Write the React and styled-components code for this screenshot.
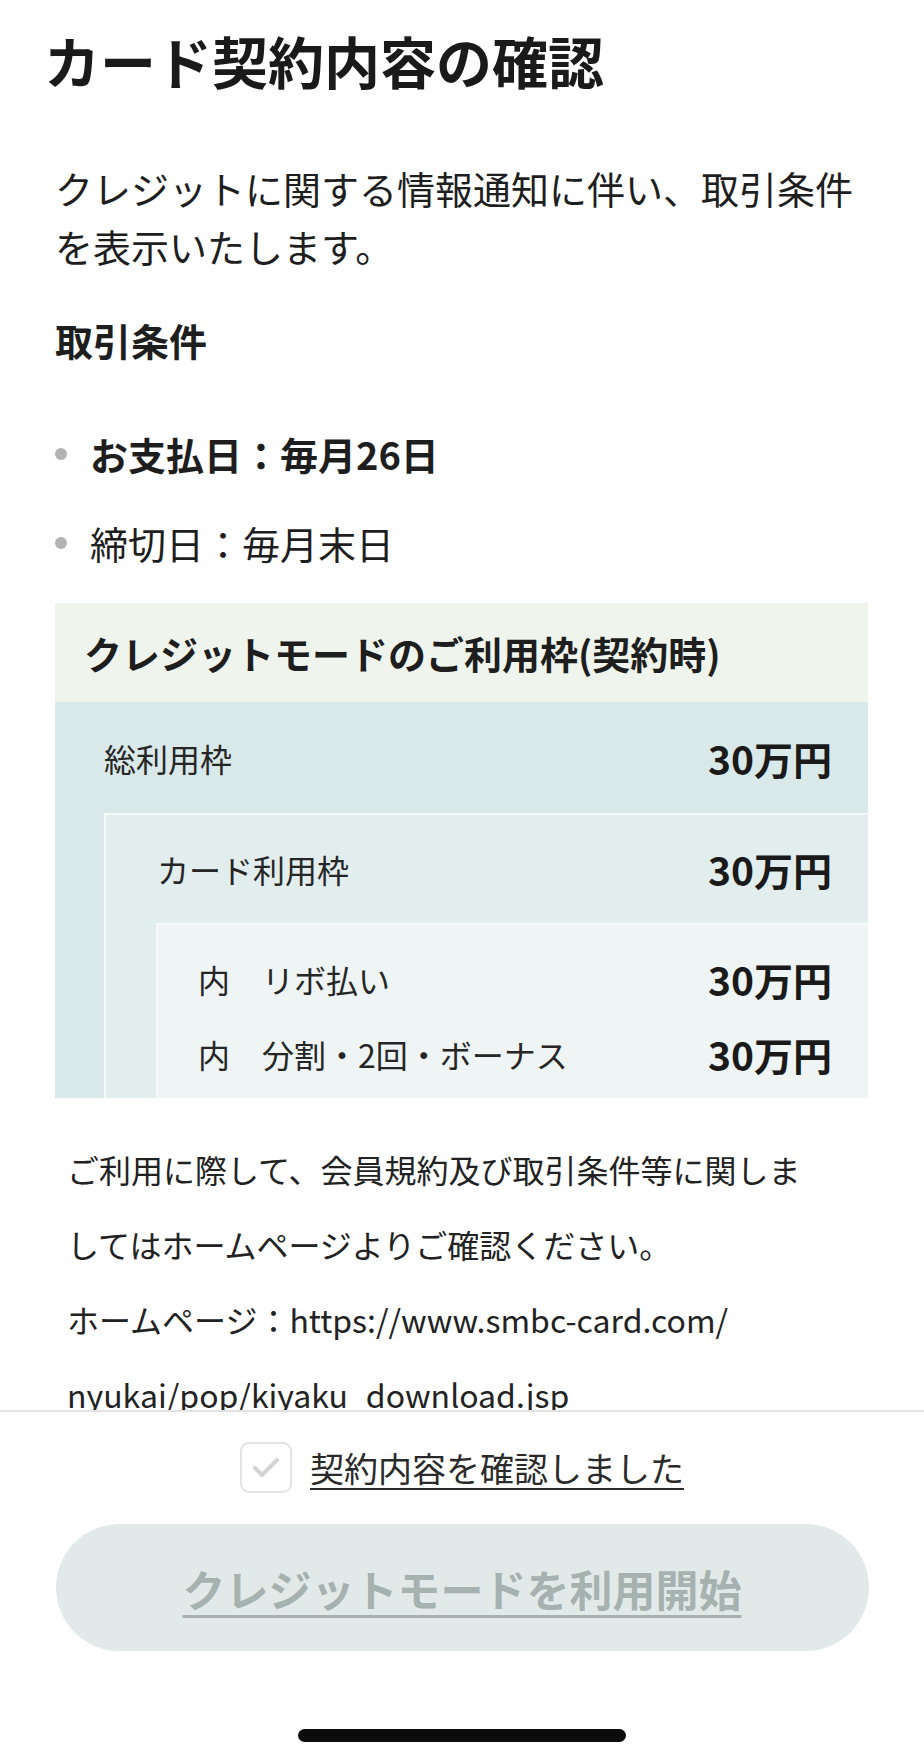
import React from 'react';
import styled, { createGlobalStyle } from 'styled-components';

const GlobalStyle = createGlobalStyle`
  body {
    margin: 0;
    background: #fff;
    font-family: "Noto Sans CJK JP", "Noto Sans", sans-serif;
    color: #1e1e1e;
  }
`;

const Screen = styled.div`
  width: 924px;
  height: 1758px;
  display: flex;
  flex-direction: column;
  background: #fff;
  overflow: hidden;
`;

const Content = styled.div`
  flex: 0 0 1410px;
  overflow: hidden;
  padding: 0 56px 0 55px;
  box-sizing: border-box;
`;

const Title = styled.h1`
  margin: 0 0 0 -11px;
  padding-top: 20px;
  font-size: 56px;
  line-height: 80px;
  font-weight: 700;
  color: #1a1a1a;
`;

const Lead = styled.p`
  margin: 59px 0 0;
  font-size: 38px;
  line-height: 58px;
`;

const SectionTitle = styled.h2`
  margin: 36px 0 0;
  font-size: 38px;
  line-height: 58px;
  font-weight: 700;
`;

const Terms = styled.ul`
  list-style: none;
  margin: 56px 0 0;
  padding: 0;
  display: flex;
  flex-direction: column;
  gap: 31px;
`;

const Term = styled.li`
  display: flex;
  align-items: center;
  gap: 23px;
  font-size: 38px;
  line-height: 58px;
  font-weight: ${p => (p.$strong ? 700 : 400)};
`;

const Dot = styled.span`
  width: 12px;
  height: 12px;
  border-radius: 50%;
  background: #b3b3b3;
  flex: none;
`;

const LimitBox = styled.section`
  margin-top: 31px;
`;

const LimitHead = styled.div`
  height: 99px;
  display: flex;
  align-items: center;
  padding-left: 29px;
  background: #eff5ec;
  font-size: 38px;
  font-weight: 700;
  color: #1e1e1e;
`;

const Level = styled.div`
  background: ${p => p.$bg};
  margin-left: ${p => p.$indent}px;
  border-top: ${p => (p.$edge ? '2px solid #f6faf9' : 'none')};
  border-left: ${p => (p.$edge ? '2px solid #f6faf9' : 'none')};
  padding: ${p => p.$pad || '0'};
`;

const Row = styled.div`
  height: ${p => p.$h}px;
  display: flex;
  align-items: center;
  justify-content: space-between;
  padding: 0 36px 0 ${p => p.$left}px;
`;

const Label = styled.span`
  font-size: 32px;
  color: #262626;
  white-space: pre;
`;

const Amount = styled.span`
  font-size: 39px;
  font-weight: 700;
  color: #1a1a1a;
`;

const Notice = styled.p`
  margin: 34px 0 0;
  padding: 0 12px;
  font-size: 32px;
  line-height: 75px;
  color: #222;
`;

const BottomBar = styled.footer`
  flex: 1;
  border-top: 2px solid #e2e2e2;
  display: flex;
  flex-direction: column;
  align-items: center;
`;

const Agree = styled.label`
  margin-top: 30px;
  display: flex;
  align-items: center;
  gap: 18px;
`;

const CheckBox = styled.span`
  width: 52px;
  height: 51px;
  box-sizing: border-box;
  border: 2px solid #e3e3e3;
  border-radius: 9px;
  display: flex;
  align-items: center;
  justify-content: center;
`;

const AgreeText = styled.span`
  font-size: 34px;
  color: #2a2a2a;
  text-decoration: underline;
  text-decoration-thickness: 2px;
  text-underline-offset: 6px;
`;

const StartButton = styled.button`
  margin-top: 31px;
  width: 813px;
  height: 127px;
  border: none;
  border-radius: 64px;
  background: #e2eae9;
  font-family: inherit;
  font-size: 43px;
  font-weight: 700;
  color: #a6b2b0;
  text-decoration: underline;
  text-decoration-thickness: 3px;
  text-underline-offset: 8px;
  padding: 0;
`;

const HomeIndicator = styled.div`
  margin-top: 78px;
  width: 328px;
  height: 13px;
  border-radius: 7px;
  background: #0c0c0c;
`;

const innerRows = [
  { label: '内　リボ払い', amount: '30万円' },
  { label: '内　分割・2回・ボーナス', amount: '30万円' },
];

export default function App() {
  return (
    <Screen>
      <GlobalStyle />
      <Content>
        <Title>カード契約内容の確認</Title>
        <Lead>クレジットに関する情報通知に伴い、取引条件を表示いたします。</Lead>
        <SectionTitle>取引条件</SectionTitle>
        <Terms>
          <Term $strong>
            <Dot />
            お支払日：毎月26日
          </Term>
          <Term>
            <Dot />
            締切日：毎月末日
          </Term>
        </Terms>

        <LimitBox>
          <LimitHead>クレジットモードのご利用枠(契約時)</LimitHead>
          <Level $bg="#d9e8e8" $indent={0}>
            <Row $h={111} $left={49}>
              <Label>総利用枠</Label>
              <Amount>30万円</Amount>
            </Row>
            <Level $bg="#e2eded" $indent={49} $edge>
              <Row $h={108} $left={51}>
                <Label>カード利用枠</Label>
                <Amount>30万円</Amount>
              </Row>
              <Level $bg="#eef5f4" $indent={50} $edge $pad="16px 0 7px">
                {innerRows.map(r => (
                  <Row key={r.label} $h={75} $left={40}>
                    <Label>{r.label}</Label>
                    <Amount>{r.amount}</Amount>
                  </Row>
                ))}
              </Level>
            </Level>
          </Level>
        </LimitBox>

        <Notice>
          ご利用に際して、会員規約及び取引条件等に関しま
          <br />
          してはホームページよりご確認ください。
          <br />
          ホームページ：https://www.smbc-card.com/
          <br />
          nyukai/pop/kiyaku_download.jsp
        </Notice>
      </Content>

      <BottomBar>
        <Agree>
          <CheckBox>
            <svg width="30" height="24" viewBox="0 0 30 24" fill="none">
              <polyline
                points="4,12 11,19 26,4"
                stroke="#d3d3d3"
                strokeWidth="4"
                strokeLinecap="round"
                strokeLinejoin="round"
              />
            </svg>
          </CheckBox>
          <AgreeText>契約内容を確認しました</AgreeText>
        </Agree>
        <StartButton disabled>クレジットモードを利用開始</StartButton>
        <HomeIndicator />
      </BottomBar>
    </Screen>
  );
}
